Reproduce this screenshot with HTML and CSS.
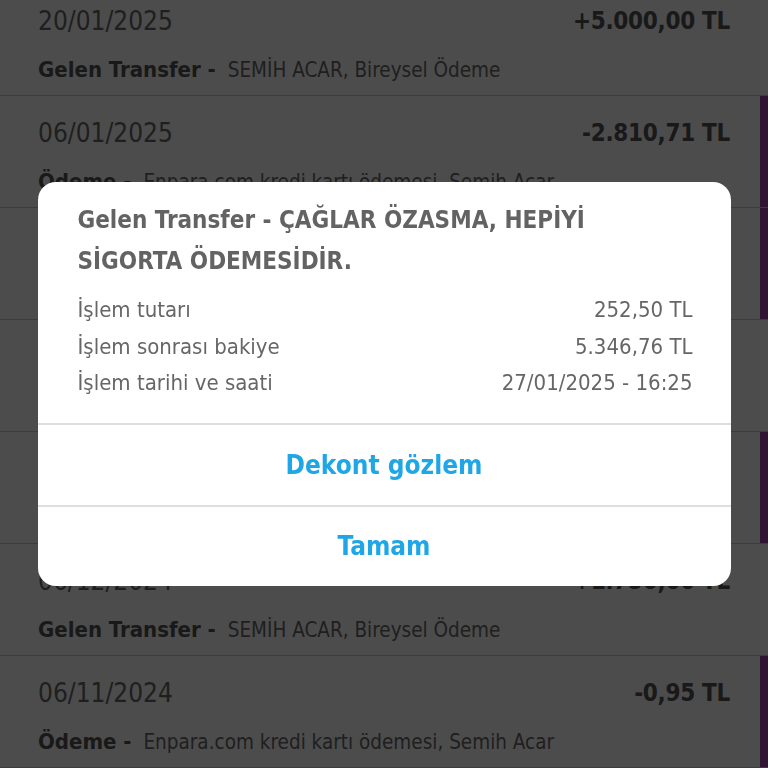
FILE: index.html
```html
<!DOCTYPE html>
<html lang="tr">
<head>
    <meta charset="UTF-8">
    <meta name="viewport" content="width=device-width, initial-scale=1.0">
    <title>Hesap Hareketleri</title>
    <link rel="stylesheet" href="styles.css">
</head>
<body>
    <div class="list">
        <div class="tx">
            <div class="tx-top">
                <span class="date">20/01/2025</span>
                <span class="amount">+5.000,00 TL</span>
            </div>
            <div class="desc"><b>Gelen Transfer -</b> SEMİH ACAR, Bireysel Ödeme</div>
        </div>
        <div class="tx out">
            <div class="tx-top">
                <span class="date">06/01/2025</span>
                <span class="amount">-2.810,71 TL</span>
            </div>
            <div class="desc"><b>Ödeme -</b> Enpara.com kredi kartı ödemesi, Semih Acar</div>
        </div>
        <div class="tx out">
            <div class="tx-top">
                <span class="date">03/01/2025</span>
                <span class="amount">-1.200,00 TL</span>
            </div>
            <div class="desc"><b>Ödeme -</b> Enpara.com kredi kartı ödemesi, Semih Acar</div>
        </div>
        <div class="tx">
            <div class="tx-top">
                <span class="date">27/12/2024</span>
                <span class="amount">+252,50 TL</span>
            </div>
            <div class="desc"><b>Gelen Transfer -</b> ÇAĞLAR ÖZASMA, Sigorta</div>
        </div>
        <div class="tx out">
            <div class="tx-top">
                <span class="date">10/12/2024</span>
                <span class="amount">-850,00 TL</span>
            </div>
            <div class="desc"><b>Ödeme -</b> Enpara.com kredi kartı ödemesi, Semih Acar</div>
        </div>
        <div class="tx">
            <div class="tx-top">
                <span class="date">06/12/2024</span>
                <span class="amount">+1.750,00 TL</span>
            </div>
            <div class="desc"><b>Gelen Transfer -</b> SEMİH ACAR, Bireysel Ödeme</div>
        </div>
        <div class="tx out">
            <div class="tx-top">
                <span class="date">06/11/2024</span>
                <span class="amount">-0,95 TL</span>
            </div>
            <div class="desc"><b>Ödeme -</b> Enpara.com kredi kartı ödemesi, Semih Acar</div>
        </div>
    </div>

    <div class="overlay">
        <div class="alert">
            <div class="alert-body">
                <h1 class="alert-title">Gelen Transfer - ÇAĞLAR ÖZASMA, HEPİYİ<br>SİGORTA ÖDEMESİDİR.</h1>
                <div class="info">
                    <span>İşlem tutarı</span>
                    <span>252,50 TL</span>
                </div>
                <div class="info">
                    <span>İşlem sonrası bakiye</span>
                    <span>5.346,76 TL</span>
                </div>
                <div class="info">
                    <span>İşlem tarihi ve saati</span>
                    <span>27/01/2025 - 16:25</span>
                </div>
            </div>
            <button class="alert-btn">Dekont gözlem</button>
            <button class="alert-btn">Tamam</button>
        </div>
    </div>
</body>
</html>
```

FILE: styles.css
```css
* {
    margin: 0;
    padding: 0;
    box-sizing: border-box;
    font-family: 'Liberation Sans Narrow', 'DejaVu Sans Condensed', 'Liberation Sans', sans-serif;
}

body {
    background: #fff;
    height: 768px;
    overflow: hidden;
}

.list {
    margin-top: -16px;
}

.tx {
    height: 112px;
    padding: 20px 38px 0;
    border-bottom: 1px solid #c8c8c8;
}

.tx.out {
    box-shadow: inset -8px 0 0 #a046a8;
}

.tx-top {
    display: flex;
    justify-content: space-between;
    align-items: center;
    height: 34px;
}

.date {
    font-size: 26px;
    color: #6a6a6a;
}

.amount {
    font-size: 24px;
    font-weight: bold;
    letter-spacing: -0.3px;
    color: #555;
}

.desc {
    margin-top: 17px;
    line-height: 30px;
    font-size: 20.5px;
    color: #6a6a6a;
}

.desc b {
    font-size: 22px;
    color: #555;
    margin-right: 6px;
}

.overlay {
    position: fixed;
    inset: 0;
    background: rgba(0, 0, 0, 0.7);
    display: flex;
    justify-content: center;
    align-items: center;
}

.alert {
    width: 693px;
    background: #fff;
    border-radius: 18px;
    overflow: hidden;
}

.alert-body {
    padding: 18px 38px 21px 40px;
}

.alert-title {
    font-size: 24px;
    line-height: 41px;
    font-weight: bold;
    color: #636363;
    margin-bottom: 10px;
}

.info {
    display: flex;
    justify-content: space-between;
    font-size: 22px;
    line-height: 36.5px;
    color: #666;
}

.alert-btn {
    display: block;
    width: 100%;
    height: 82px;
    border: none;
    border-top: 2px solid #dedede;
    background: none;
    font-size: 26px;
    font-weight: bold;
    color: #1ea6e6;
}

.alert-btn:last-child {
    height: 81px;
}
```
